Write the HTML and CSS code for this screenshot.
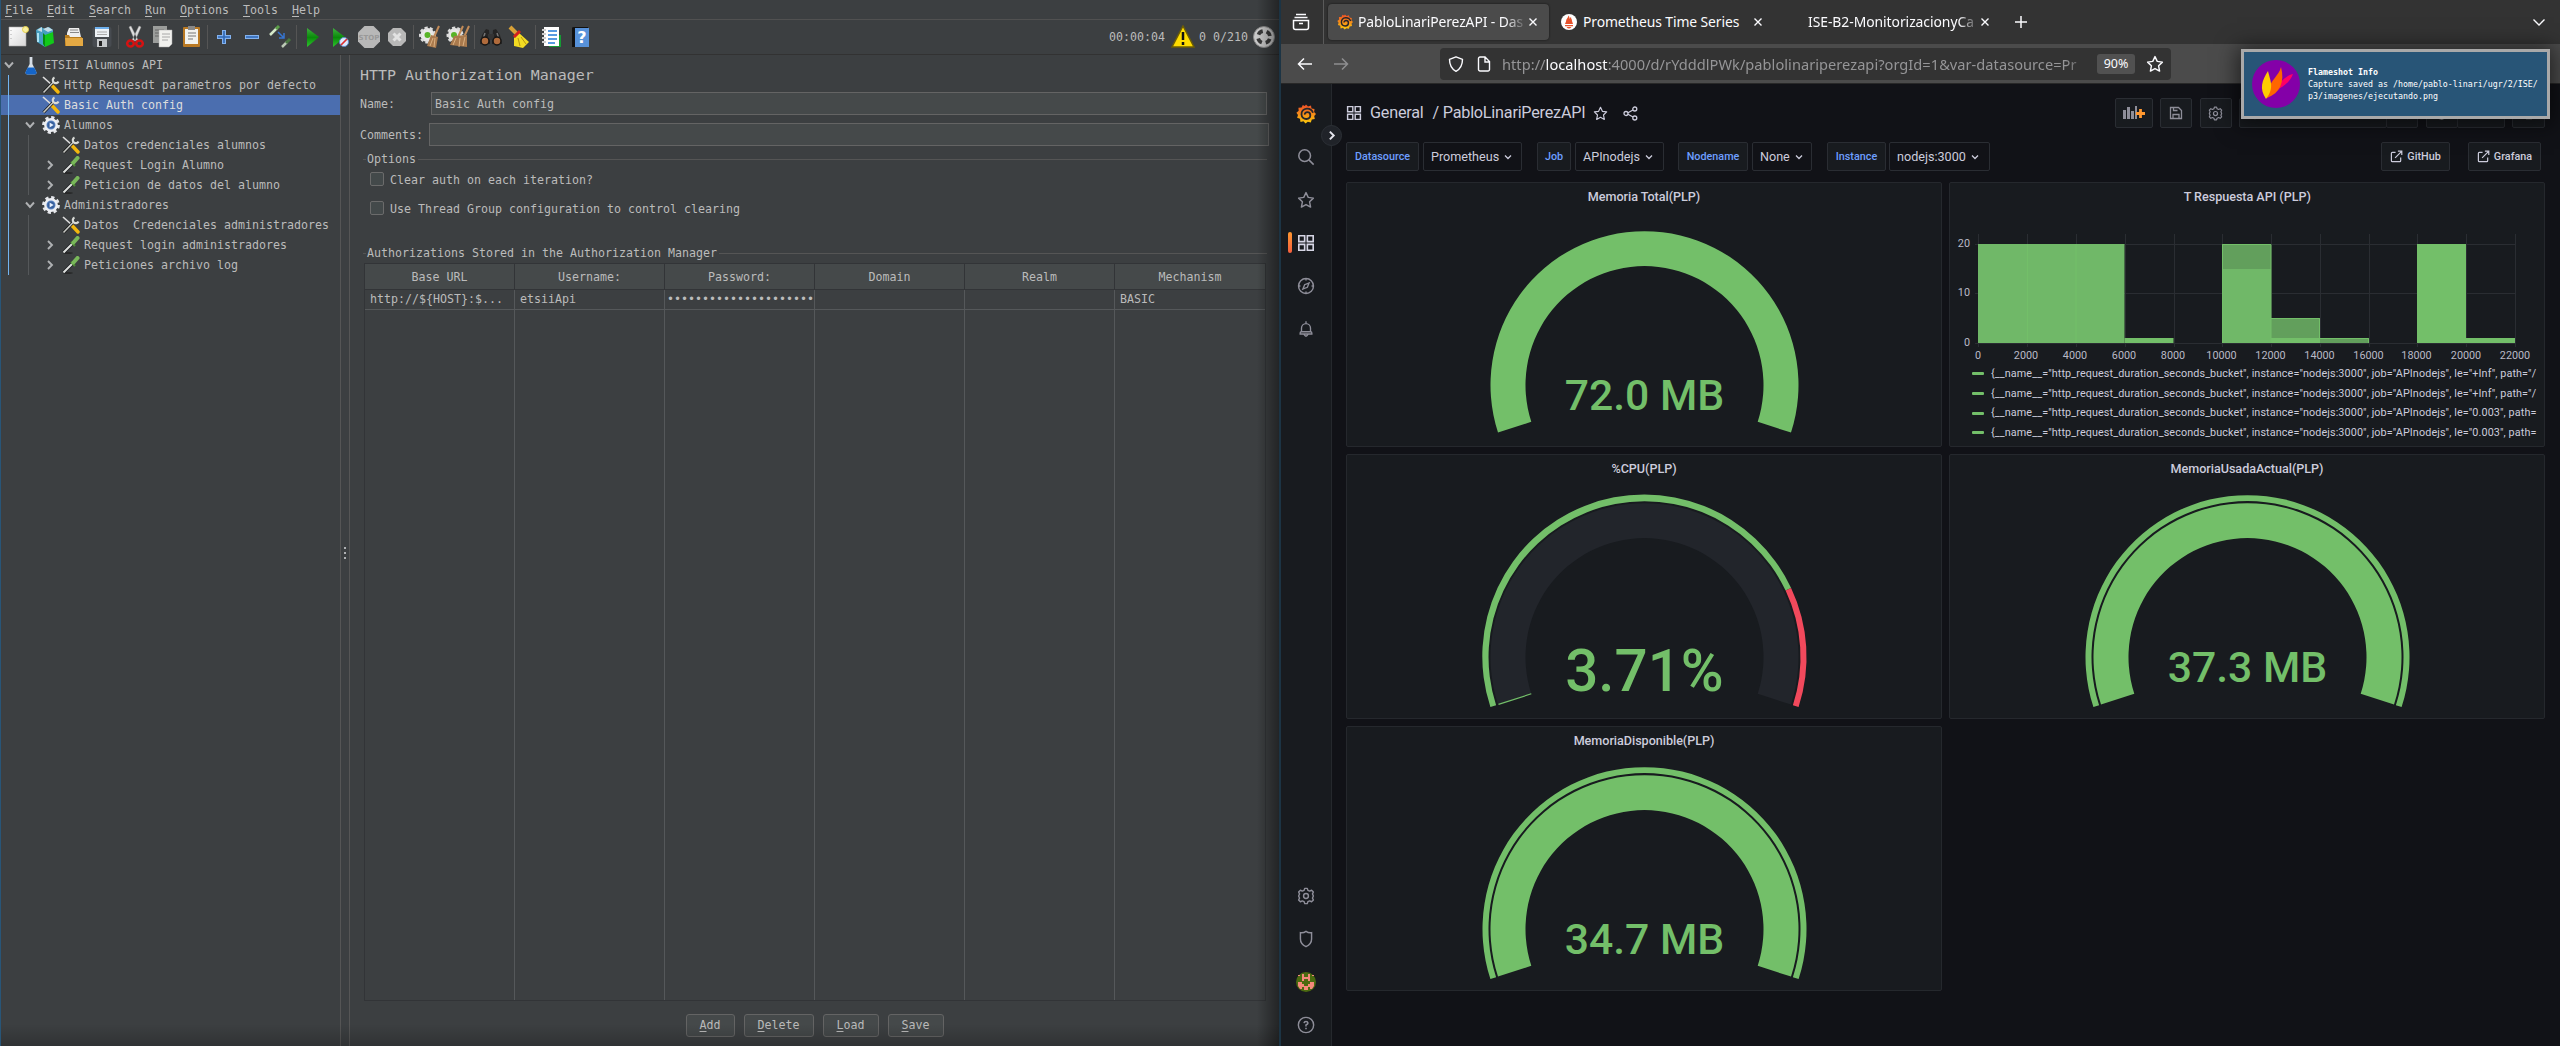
FILE: index.html
```html
<!DOCTYPE html>
<html lang="es">
<head>
<meta charset="utf-8">
<title>JMeter y Grafana</title>
<link rel="stylesheet" href="styles.css">
</head>
<body>
<svg class="defs" width="0" height="0">
  <defs>
    <linearGradient id="flame" x1="0" y1="0" x2="0" y2="1"><stop offset="0" stop-color="#f04e28"/><stop offset="1" stop-color="#fbca0a"/></linearGradient>
    <linearGradient id="play" x1="0" y1="0" x2="0" y2="1"><stop offset="0" stop-color="#3fae3f"/><stop offset=".5" stop-color="#0a8a0a"/><stop offset="1" stop-color="#2fc62f"/></linearGradient>
    <linearGradient id="paper" x1="0" y1="0" x2="1" y2="1"><stop offset="0" stop-color="#ffffff"/><stop offset="1" stop-color="#d8d8d8"/></linearGradient>
  </defs>
  <symbol id="i-wrench" viewBox="0 0 18 18"><path d="M1 1l9 8" stroke="#ddd" stroke-width="1.6"/><path d="M10 9.500l6 6.500" stroke="#f3b70c" stroke-width="3.400" stroke-linecap="round"/><path d="M1.500 16.500L12 5.500" stroke="#151515" stroke-width="3"/><path d="M1.500 16.500L12 5.500" stroke="#c4c6c2" stroke-width="1.700"/><path d="M12.500 1.500a3 3 0 1 0 4 4" fill="none" stroke="#d8dad6" stroke-width="2.200"/></symbol>
  <symbol id="i-gear" viewBox="0 0 18 18"><circle cx="9" cy="9" r="7.400" fill="none" stroke="#e4e6ea" stroke-width="3" stroke-dasharray="3.200 2.600"/><circle cx="9" cy="9" r="5.700" fill="#5d86c5" stroke="#eceef2" stroke-width="2.400"/><circle cx="9" cy="9" r="3.600" fill="#375f9c"/><path d="M7.600 6.600l4 2.400-4 2.400z" fill="#e6f0ff"/></symbol>
  <symbol id="i-drop" viewBox="0 0 18 18"><ellipse cx="6" cy="17" rx="5" ry=".8" fill="#222"/><path d="M1.500 16.500L10 8" stroke="#1d1f20" stroke-width="3.600"/><path d="M1.500 16.500L10.500 7.500" stroke="#dfe2e0" stroke-width="2"/><path d="M9 6l4 4" stroke="#4d8b35" stroke-width="2"/><path d="M11.500 6.500l4-4.500" stroke="#79b85a" stroke-width="4" stroke-linecap="round"/></symbol>
  <symbol id="i-flask" viewBox="0 0 14 20"><path d="M7 0v3" stroke="#333" stroke-width="1"/><path d="M5.600 2h2.800v7l4.200 8.500q0 2-2 2H3.400q-2 0-2-2L5.600 9z" fill="#d6dee6"/><path d="M3.700 12.500h6.600l2.300 5q0 2-2 2H3.400q-2 0-2-2z" fill="#1565c8"/></symbol>
  <symbol id="i-grid" viewBox="0 0 20 20"><g fill="none" stroke="currentColor" stroke-width="1.800"><path d="M2 2h6.500v6.500H2zM11.500 2H18v6.500h-6.500zM2 11.500h6.500V18H2zM11.500 11.500H18V18h-6.500z"/></g></symbol>
  <symbol id="i-star" viewBox="0 0 20 20"><path d="M10 1.800l2.500 5.300 5.700.8-4.200 4.100 1.100 5.900-5.100-2.800-5.100 2.800L6 12 1.800 7.900l5.700-.8z" fill="none" stroke="currentColor" stroke-width="1.600" stroke-linejoin="round"/></symbol>
  <symbol id="i-cog" viewBox="0 0 20 20"><path d="M8.600 1.500h2.800l.7 2.200 2 .9 2.100-1 2 2-1 2.100.9 2v.6l-.9 2 1 2.100-2 2-2.100-1-2 .9-.7 2.200H8.600l-.7-2.200-2-.9-2.100 1-2-2 1-2.100-.9-2v-.6l.9-2-1-2.100 2-2 2.100 1 2-.9z" fill="none" stroke="currentColor" stroke-width="1.600" stroke-linejoin="round"/><circle cx="10" cy="10" r="2.700" fill="none" stroke="currentColor" stroke-width="1.600"/></symbol>
  <symbol id="i-graf" viewBox="0 0 20 20"><path d="M10 .5l2 2 3-1 .5 3 3 .6-.4 3L20 10l-1.800 2 .6 3-3 .6-1 2.900-3-.8-2.300 1.800-2-2.200-3 .7-.5-3.200-2.900-1L2 11 .4 8.700l2.300-1.900-.3-3 3.200-.2L6.800 1l2 .9z" fill="url(#flame)"/><path d="M17 8.700C16 5.800 13.500 4.400 10.700 4.600 7.200 4.800 5.300 7.500 5.500 10.400c.2 2.800 2.300 4.700 4.900 4.600 2.200-.1 3.900-1.700 3.900-3.700S12.900 8.200 11.300 8.200 8.700 9.400 8.800 10.600" fill="none" stroke="#25262b" stroke-width="1.800"/></symbol>
  <symbol id="i-chev" viewBox="0 0 10 10"><path d="M2 3.500l3 3 3-3" fill="none" stroke="currentColor" stroke-width="1.300"/></symbol>
  <symbol id="i-ext" viewBox="0 0 14 14"><path d="M6 2.500H2.500a1 1 0 0 0-1 1v8a1 1 0 0 0 1 1h8a1 1 0 0 0 1-1V8M8.500 1.300h4.200v4.200M12.500 1.500L5.500 8.500" fill="none" stroke="currentColor" stroke-width="1.300"/></symbol>
  <symbol id="i-x" viewBox="0 0 10 10"><path d="M1.500 1.500l7 7M8.500 1.500l-7 7" stroke="#fbfbfe" stroke-width="1.400"/></symbol>
  <symbol id="i-down" viewBox="0 0 10 10"><path d="M1 2.500l4 4.500 4-4.500" fill="none" stroke="#afb1b3" stroke-width="1.900"/></symbol>
  <symbol id="i-right" viewBox="0 0 10 10"><path d="M3 1l4 4-4 4" fill="none" stroke="#afb1b3" stroke-width="1.900"/></symbol>
  <symbol id="i-zoom" viewBox="0 0 20 20"><circle cx="8.500" cy="8.500" r="6.500" fill="none" stroke="currentColor" stroke-width="1.700"/><path d="M13.200 13.200L18.500 18.500" stroke="currentColor" stroke-width="1.700"/></symbol>
</svg>

<main class="jmeter">
  <nav class="menu"><span><u>F</u>ile</span><span><u>E</u>dit</span><span><u>S</u>earch</span><span><u>R</u>un</span><span><u>O</u>ptions</span><span><u>T</u>ools</span><span><u>H</u>elp</span></nav>
  <div class="tools">
    <svg viewBox="0 0 24 24"><path d="M3 2h17v19H3z" fill="url(#paper)" stroke="#aaa" stroke-width=".6"/><path d="M5 5v12" stroke="#aaa" stroke-dasharray="1 3"/><circle cx="19.500" cy="4.500" r="3" fill="#f8f0a0" stroke="#e6d04d" stroke-width="1"/></svg>
    <svg viewBox="0 0 24 24"><path d="M2 5l5-3 4 2 4-2 4 3v5l-8 3v9l-8-5z" fill="#469fc1"/><path d="M3 5l5-3v5M9 4l5-2 5 3-5 2z" fill="#c3dce6"/><path d="M11 10l8-3 1 11-9 4z" fill="#12c91a"/><path d="M11 10l-2-2v11l2 3z" fill="#078d10"/><path d="M4 8v9" stroke="#a9e2f4" stroke-width="2"/></svg>
    <svg viewBox="0 0 24 24"><path d="M5 8l2-5h10l2 9H5z" fill="#eee"/><path d="M8 5h8M8 7.500h9" stroke="#888"/><path d="M3 10h4l1 2h12v9H3z" fill="#b87c1c"/><path d="M3 13h18v8H4z" fill="#e4a943"/></svg>
    <svg viewBox="0 0 24 24"><rect x="2.500" y="2" width="19" height="20" rx="2" fill="#474b50"/><path d="M5 2h14v10H5z" fill="#eef2f6"/><path d="M5 2h14v2H5z" fill="#6eb0ed"/><path d="M7 7h10M7 9.500h10" stroke="#aaa"/><path d="M7 14h10v8H7z" fill="#c5c8ca"/><path d="M9 16h3v5H9z" fill="#222"/></svg>
    <i></i>
    <svg viewBox="0 0 24 24"><path d="M6 2l2-1 7 14-3 1zM18 2l-2-1-7 14 3 1z" fill="#dedede" stroke="#999" stroke-width=".4"/><g fill="none" stroke="#d51212" stroke-width="2.500"><ellipse cx="7.500" cy="18.500" rx="3.300" ry="3"/><ellipse cx="16.500" cy="18.500" rx="3.300" ry="3"/></g></svg>
    <svg viewBox="0 0 24 24"><path d="M2 1h14v17H2z" fill="#9b9d9b"/><path d="M4 5h9M4 8h4M4 11h4" stroke="#666"/><path d="M8 5h13v14l-3 3H8z" fill="#f1f1ee" stroke="#aaa" stroke-width=".5"/><path d="M11 9h8M11 12h8M11 15h6" stroke="#a8a8a8"/></svg>
    <svg viewBox="0 0 24 24"><rect x="4" y="2" width="17" height="20" rx="1" fill="#b97923"/><path d="M6 4h13v15H6z" fill="#f2f2ee"/><path d="M9 1h7v4H9z" fill="#888"/><path d="M9 8h8M9 11h8M9 14h5" stroke="#777"/></svg>
    <i></i>
    <svg viewBox="0 0 24 24"><path d="M12 5v14M5 12h14" stroke="#83b2ee" stroke-width="4"/><path d="M12 6v12M6 12h12" stroke="#2e67b5" stroke-width="1.600"/></svg>
    <svg viewBox="0 0 24 24"><path d="M5 12h14" stroke="#83b2ee" stroke-width="4"/><path d="M6 12h12" stroke="#2e67b5" stroke-width="1.600"/></svg>
    <svg viewBox="0 0 24 24"><path d="M2 10l7-7" stroke="#d5e9c8" stroke-width="2.500"/><path d="M8 4l3-3" stroke="#5b9d48" stroke-width="3"/><path d="M10 7l6 6m0-5v5h-5" fill="none" stroke="#3675d1" stroke-width="1.500"/><path d="M14 22l5-5" stroke="#bbc8b5" stroke-width="2.500"/><path d="M18 18l4-4" stroke="#497641" stroke-width="3"/></svg>
    <i></i>
    <svg viewBox="0 0 24 24"><path d="M6 3l12 9-12 10z" fill="url(#play)"/></svg>
    <svg viewBox="0 0 24 24"><path d="M4 3l12 9-12 10z" fill="url(#play)"/><circle cx="15" cy="17" r="4.500" fill="#deeaff" stroke="#5c87c8"/><path d="M12 20l6-6" stroke="#de3030" stroke-width="1.700"/></svg>
    <svg viewBox="0 0 24 24"><path d="M7.500 1h9L23 7.500v9L16.500 23h-9L1 16.500v-9z" fill="#b8b8b8"/><text x="12" y="15" class="stop">STOP</text></svg>
    <svg viewBox="0 0 24 24"><path d="M8 3h8l5 5v8l-5 5H8l-5-5V8z" fill="#b8b8b8"/><path d="M8.500 8.500l7 7m0-7l-7 7" stroke="#e2e2e2" stroke-width="3"/></svg>
    <i></i>
    <svg viewBox="0 0 24 24"><circle cx="9.500" cy="10" r="7" fill="#e8e8e8" stroke="#ddd" stroke-width="3" stroke-dasharray="3 2"/><circle cx="9.500" cy="10" r="3" fill="#58b428"/><path d="M21 1l-5 11" stroke="#c28b58" stroke-width="2"/><path d="M13 10l7 2-2 11-9-2z" fill="#aa7a4d"/><path d="M15 13l-3 8M17 13l-1 9" stroke="#dbb182"/></svg>
    <svg viewBox="0 0 24 24"><circle cx="9" cy="10" r="7" fill="#e8e8e8" stroke="#ddd" stroke-width="3" stroke-dasharray="3 2"/><circle cx="8" cy="10" r="3" fill="#58b428"/><path d="M17 1l-5 11M23 1l-5 11" stroke="#c28b58" stroke-width="2"/><path d="M8 11l13-1v12l-17-2z" fill="#aa7a4d"/><path d="M10 13l-3 7M14 13l-1 9M19 12l-2 9" stroke="#dbb182"/></svg>
    <i></i>
    <svg viewBox="0 0 24 24"><path d="M7 4l3 1 1 14H1l2-9zM17 4l-3 1-1 14h10l-2-9z" fill="#242424"/><path d="M9 9h6v6H9z" fill="#343434"/><path d="M6 8l-2 6M18 8l2 6" stroke="#777" stroke-width="1.500"/><g fill="#b06b3c" stroke="#151515" stroke-width="1.500"><circle cx="6" cy="16" r="4"/><circle cx="18" cy="16" r="4"/></g></svg>
    <svg viewBox="0 0 24 24"><path d="M3 2l8 8" stroke="#d8a137" stroke-width="4"/><path d="M12 8l10 9-6 6-9-2V13z" fill="#f3dc22"/><path d="M7 12l6-6" stroke="#d3211d" stroke-width="3"/><path d="M11 13l2 8M14 12l5 7" stroke="#b59512"/></svg>
    <i></i>
    <svg viewBox="0 0 24 24"><path d="M18 10h3v12H9v-4z" fill="#159b34"/><path d="M4 2h15v19H4z" fill="#fff"/><path d="M8 6h9M8 10h9M8 14h9M8 18h7" stroke="#237bd8" stroke-width="1.400"/><path d="M2 5h4M2 9h4M2 13h4M2 17h4" stroke="#ccc" stroke-width="2"/></svg>
    <svg viewBox="0 0 24 24"><path d="M4 3q0-1 2-1h14v20H4z" fill="#111"/><path d="M7 3h14v19H7z" fill="#5792da"/><text x="14" y="18" class="help">?</text></svg>
    <div class="status"><span>00:00:04</span><svg viewBox="0 0 24 24"><path d="M12 1l11 21H1z" fill="#ffdc00" stroke="#6c5d06" stroke-width="1.500"/><path d="M12 7v8m0 2v3" stroke="#111" stroke-width="2.500"/></svg><span>0</span><span>0/210</span><svg viewBox="0 0 24 24"><circle cx="12" cy="12" r="10.500" fill="#c9c9c9" stroke="#8a8a8a"/><circle cx="12" cy="12" r="6" fill="none" stroke="#3a3a3a" stroke-width="3.600" stroke-dasharray="5.400 4.025" stroke-dashoffset="-2"/></svg></div>
  </div>
  <div class="work">
    <aside class="tree">
      <div class="row root"><svg class="c"><use href="#i-down"/></svg><svg class="flask"><use href="#i-flask"/></svg><span>ETSII Alumnos API</span></div>
      <div class="kids blue">
        <div class="row"><svg class="g"><use href="#i-wrench"/></svg><span>Http Requesdt parametros por defecto</span></div>
        <div class="row sel"><svg class="g"><use href="#i-wrench"/></svg><span>Basic Auth config</span></div>
        <div class="row"><svg class="c"><use href="#i-down"/></svg><svg class="g"><use href="#i-gear"/></svg><span>Alumnos</span></div>
        <div class="kids">
          <div class="row"><svg class="g"><use href="#i-wrench"/></svg><span>Datos credenciales alumnos</span></div>
          <div class="row"><svg class="c"><use href="#i-right"/></svg><svg class="g"><use href="#i-drop"/></svg><span>Request Login Alumno</span></div>
          <div class="row"><svg class="c"><use href="#i-right"/></svg><svg class="g"><use href="#i-drop"/></svg><span>Peticion de datos del alumno</span></div>
        </div>
        <div class="row"><svg class="c"><use href="#i-down"/></svg><svg class="g"><use href="#i-gear"/></svg><span>Administradores</span></div>
        <div class="kids">
          <div class="row"><svg class="g"><use href="#i-wrench"/></svg><span>Datos  Credenciales administradores</span></div>
          <div class="row"><svg class="c"><use href="#i-right"/></svg><svg class="g"><use href="#i-drop"/></svg><span>Request login administradores</span></div>
          <div class="row"><svg class="c"><use href="#i-right"/></svg><svg class="g"><use href="#i-drop"/></svg><span>Peticiones archivo log</span></div>
        </div>
      </div>
    </aside>
    <div class="grip"><b></b><b></b><b></b></div>
    <section class="editor">
      <h1>HTTP Authorization Manager</h1>
      <label class="field name"><span>Name:</span><div>Basic Auth config</div></label>
      <label class="field comments"><span>Comments:</span><div></div></label>
      <div class="legend"><span>Options</span></div>
      <div class="check first"><b></b>Clear auth on each iteration?</div>
      <div class="check"><b></b>Use Thread Group configuration to control clearing</div>
      <div class="legend second"><span>Authorizations Stored in the Authorization Manager</span></div>
      <div class="table">
        <div class="tr th"><span>Base URL</span><span>Username:</span><span>Password:</span><span>Domain</span><span>Realm</span><span>Mechanism</span></div>
        <div class="tr"><span>http://${HOST}:$...</span><span>etsiiApi</span><span class="pw">•••••••••••••••••••••</span><span></span><span></span><span>BASIC</span></div>
        <div class="tr rest"><span></span><span></span><span></span><span></span><span></span><span></span></div>
      </div>
      <div class="actions"><button><u>A</u>dd</button><button><u>D</u>elete</button><button><u>L</u>oad</button><button><u>S</u>ave</button></div>
    </section>
  </div>
</main>

<main class="browser">
  <div class="tabs">
    <div class="view"><svg width="18" height="18" viewBox="0 0 18 18"><path d="M4 1.500h10M2.500 4.500h13M1.500 7.500h15v7a2 2 0 0 1-2 2h-11a2 2 0 0 1-2-2zM7 10.500h4" fill="none" stroke="#fbfbfe" stroke-width="1.500"/></svg></div>
    <div class="tab on"><svg width="16" height="16"><use href="#i-graf"/></svg><span>PabloLinariPerezAPI - Das</span><svg width="10" height="10"><use href="#i-x"/></svg></div>
    <div class="tab two"><svg width="16" height="16" viewBox="0 0 16 16"><circle cx="8" cy="8" r="8" fill="#fff"/><path d="M4 10h8L11 7c0-2-1-2-1-4-1 1-1 1-1.300 2C8.500 3 8 2 7.500 1.500 7 4 5 5 5 7.500zM4 11h8v1.300H4zM5.500 13h5q-2.500 3-5 0z" fill="#e6522c"/></svg><span>Prometheus Time Series</span><svg width="10" height="10"><use href="#i-x"/></svg></div>
    <div class="tab three"><span>ISE-B2-MonitorizacionyCa</span><svg width="10" height="10"><use href="#i-x"/></svg></div>
    <svg class="plus" width="14" height="14" viewBox="0 0 14 14"><path d="M7 1v12M1 7h12" stroke="#fbfbfe" stroke-width="1.500"/></svg>
    <svg class="more" width="14" height="14" viewBox="0 0 14 14"><path d="M1.500 4.500L7 10l5.500-5.500" fill="none" stroke="#fbfbfe" stroke-width="1.400"/></svg>
  </div>
  <div class="nav">
    <svg width="16" height="16" viewBox="0 0 16 16"><path d="M15 8H2M7 2.500L1.500 8 7 13.500" fill="none" stroke="#fbfbfe" stroke-width="1.500"/></svg>
    <svg class="fwd" width="16" height="16" viewBox="0 0 16 16"><path d="M1 8h13M9 2.500L14.500 8 9 13.500" fill="none" stroke="#8e8e90" stroke-width="1.500"/></svg>
    <div class="url">
      <svg width="16" height="16" viewBox="0 0 16 16"><path d="M8 .8l6.500 2.500c0 6-2 9.700-6.500 12C3.500 13 1.500 9.300 1.500 3.300z" fill="none" stroke="#fbfbfe" stroke-width="1.400" stroke-linejoin="round"/></svg>
      <svg class="doc" width="14" height="16" viewBox="0 0 14 16"><path d="M1.500 2.500a1.500 1.500 0 0 1 1.500-1.500h5l4.500 4.500v8A1.500 1.500 0 0 1 11 15H3a1.500 1.500 0 0 1-1.500-1.500zM8 1v5h4.500" fill="none" stroke="#fbfbfe" stroke-width="1.400"/></svg>
      <span class="addr">http://<em>localhost</em>:4000/d/rYdddlPWk/pablolinariperezapi?orgId=1&amp;var-datasource=Pr</span>
      <span class="pct">90%</span>
      <svg width="18" height="18" class="bm"><use href="#i-star"/></svg>
    </div>
  </div>
  <div class="grafana">
    <aside class="side">
      <svg class="logo"><use href="#i-graf"/></svg>
      <svg><use href="#i-zoom"/></svg>
      <svg><use href="#i-star"/></svg>
      <svg class="cur"><use href="#i-grid"/></svg>
      <svg viewBox="0 0 20 20"><circle cx="10" cy="10" r="8.300" fill="none" stroke="currentColor" stroke-width="1.600"/><path d="M13.500 6.500l-2 5-5 2 2-5zM10 1.500v2.300M10 16.200v2.300M1.500 10h2.300M16.200 10h2.300" fill="none" stroke="currentColor" stroke-width="1.500"/></svg>
      <svg viewBox="0 0 20 20"><path d="M10 1.500v2M5 13V9a5 5 0 0 1 10 0v4M5 13h10q1.500 0 1.500 1.500v1h-13v-1Q3.500 13 5 13zM7.800 16q2.200 4 4.400 0" fill="none" stroke="currentColor" stroke-width="1.500"/></svg>
      <svg class="push"><use href="#i-cog"/></svg>
      <svg viewBox="0 0 20 20"><path d="M3.800 3q3.500.5 6.200-1.500Q12.700 3.500 16.200 3v7c0 4-2 6.500-6.200 8.500C5.800 16.500 3.800 14 3.800 10z" fill="none" stroke="currentColor" stroke-width="1.600"/></svg>
      <svg class="ava" viewBox="0 0 20 20"><circle cx="10" cy="10" r="10" fill="#4b6a10"/><path d="M6 2h2v3h4V2h2v7h-2V7H8v2H6zM2 10h4v2h2v2h4v-2h2v-2h4v4l-2 3h-2v-2h-2v3H8v-3H6v2H4l-2-3zM2 3h2v1H2zM16 3h2v1h-2z" fill="#f4897b"/></svg>
      <svg viewBox="0 0 20 20"><circle cx="10" cy="10" r="8.500" fill="none" stroke="currentColor" stroke-width="1.600"/><path d="M7.800 8q.3-2 2.200-2t2.200 1.800Q12.200 9 10 10v1.800M10 13v1.700" fill="none" stroke="currentColor" stroke-width="1.700"/></svg>
      <span class="toggle"><svg width="11" height="11" viewBox="0 0 10 10"><path d="M3.500 1.500L7 5 3.500 8.500" fill="none" stroke="#e4e4ec" stroke-width="1.800"/></svg></span>
    </aside>
    <div class="dash">
      <header class="crumb">
        <svg width="16" height="16"><use href="#i-grid"/></svg><span class="gen">General</span><span>/ PabloLinariPerezAPI</span>
        <svg width="15" height="15"><use href="#i-star"/></svg>
        <svg class="share" width="15" height="15" viewBox="0 0 15 15"><g fill="none" stroke="currentColor" stroke-width="1.300"><circle cx="3" cy="7.500" r="2"/><circle cx="11.800" cy="3" r="2"/><circle cx="11.800" cy="12" r="2"/><path d="M5 6.700l5-2.700M5 8.300l5 2.700"/></g></svg>
        <div class="btns">
          <b class="w38"><svg width="22" height="14" viewBox="0 0 22 14"><path d="M0 4h3v9H0zM4 1h3v12H4zM8 5h3v8H8zM12 0h2v13h-2z" fill="#8e8e99"/><path d="M17.500 3v9M13 7.500h9" stroke="#ff9830" stroke-width="2.800"/></svg></b>
          <b class="w32"><svg width="14" height="14" viewBox="0 0 14 14"><path d="M1.500 1.500h8l3 3v8h-11zM4.500 1.500v3h4M4 12.500v-4h6v4" fill="none" stroke="currentColor" stroke-width="1.300"/></svg></b>
          <b class="w32"><svg width="15" height="15"><use href="#i-cog"/></svg></b>
          <b class="time"><svg width="14" height="14" viewBox="0 0 14 14"><circle cx="7" cy="7" r="5.500" fill="none" stroke="currentColor" stroke-width="1.300"/><path d="M7 3.500V7h3" fill="none" stroke="currentColor"/></svg></b>
          <b class="join"><svg width="14" height="14"><use href="#i-zoom"/></svg></b>
          <b class="w32"><svg width="14" height="14" viewBox="0 0 14 14"><path d="M12 4A6 6 0 1 0 12 10M12 1v3.500H8.500" fill="none" stroke="currentColor" stroke-width="1.300"/></svg></b>
          <b class="join wide"></b>
          <b class="last"><svg width="14" height="14" viewBox="0 0 14 14"><path d="M1 2h12v8H1zM4 12.500h6" fill="none" stroke="currentColor" stroke-width="1.300"/></svg></b>
        </div>
      </header>
      <div class="vars">
        <b class="k1">Datasource</b><span class="v1">Prometheus<svg><use href="#i-chev"/></svg></span>
        <b class="k2">Job</b><span class="v2">APInodejs<svg><use href="#i-chev"/></svg></span>
        <b class="k3">Nodename</b><span class="v3">None<svg><use href="#i-chev"/></svg></span>
        <b class="k4">Instance</b><span class="v4">nodejs:3000<svg><use href="#i-chev"/></svg></span>
        <a class="gh"><svg width="13" height="13"><use href="#i-ext"/></svg>GitHub</a><a class="gf"><svg width="13" height="13"><use href="#i-ext"/></svg>Grafana</a>
      </div>
      <div class="panels">
        <section class="panel"><h2>Memoria Total(PLP)</h2>
          <svg class="viz" viewBox="0 0 596 265"><g transform="translate(298.500 203)"><path class="green" d="M-146.500 47.600A154 154 0 1 1 146.500 47.600L113.200 36.800A119 119 0 1 0-113.200 36.800z"/><text class="val" y="25">72.0 MB</text></g></svg></section>
        <section class="panel"><h2>T Respuesta API (PLP)</h2>
          <svg class="viz" viewBox="0 0 596 265">
            <path d="M29.500 52v113M78.500 52v113M127.500 52v113M176.500 52v113M225.500 52v113M273.500 52v113M322.500 52v113M371.500 52v113M420.500 52v113M468.500 52v113M517.500 52v113M566.500 52v113M26 62.500h540M26 111.500h540M26 161.500h540" stroke="#2a2d32"/>
            <path d="M29 62h146.500v99H29zM273 87h49v74h-49z" fill="#70b868"/><path d="M78 62h1v99h-1zM126.500 62h1v99h-1z" fill="#73bf69"/>
            <path d="M273 62h49v25h-49zM322 136h49v20h-49zM371 156h49v5h-49z" fill="#629f5c"/>
            <path class="green" d="M175.500 156H224.500v5h-49zM322 156h49v5h-49zM468 62h49v99h-49zM517 156h49v5h-49z"/>
            <path d="M273.500 161V62.500h48.500V161M322 136.500h48.500V161M371 156.500h48.500v4.500" fill="none" stroke="#73bf69"/>
            <g class="ax end"><text x="21" y="65">20</text><text x="21" y="114">10</text><text x="21" y="164">0</text></g>
            <g class="ax"><text x="29" y="177">0</text><text x="77" y="177">2000</text><text x="126" y="177">4000</text><text x="175" y="177">6000</text><text x="224" y="177">8000</text><text x="272.500" y="177">10000</text><text x="321.500" y="177">12000</text><text x="370.500" y="177">14000</text><text x="419.500" y="177">16000</text><text x="467.500" y="177">18000</text><text x="517" y="177">20000</text><text x="566" y="177">22000</text></g>
          </svg>
          <ul><li>{__name__="http_request_duration_seconds_bucket", instance="nodejs:3000", job="APInodejs", le="+Inf", path="/</li><li>{__name__="http_request_duration_seconds_bucket", instance="nodejs:3000", job="APInodejs", le="+Inf", path="/</li><li>{__name__="http_request_duration_seconds_bucket", instance="nodejs:3000", job="APInodejs", le="0.003", path=</li><li>{__name__="http_request_duration_seconds_bucket", instance="nodejs:3000", job="APInodejs", le="0.003", path=</li></ul></section>
        <section class="panel"><h2>%CPU(PLP)</h2>
          <svg class="viz" viewBox="0 0 596 265"><g transform="translate(298.500 203)"><path fill="#22252b" d="M-146.500 47.600A154 154 0 1 1 146.500 47.600L113.200 36.800A119 119 0 1 0-113.200 36.800z"/><path d="M-146 47.400L-113.200 36.800" stroke="#73bf69" stroke-width="1.200"/><path class="green" d="M-154.100 50.100A162 162 0 0 1 146.600-69L141.100-66.400A156 156 0 0 0-148.400 48.200z"/><path fill="#f2495c" d="M146.600-69A162 162 0 0 1 154.100 50.100L148.400 48.200A156 156 0 0 0 141.100-66.400z"/><text class="val big" y="34">3.71%</text></g></svg></section>
        <section class="panel"><h2>MemoriaUsadaActual(PLP)</h2>
          <svg class="viz" viewBox="0 0 596 265"><g transform="translate(298.500 203)"><path class="green" d="M-146.500 47.600A154 154 0 1 1 146.500 47.600L113.200 36.800A119 119 0 1 0-113.200 36.800z"/><path class="green" d="M-154.100 50.100A162 162 0 1 1 154.100 50.100L148.400 48.200A156 156 0 1 0-148.400 48.200z"/><text class="val" y="25">37.3 MB</text></g></svg></section>
        <section class="panel"><h2>MemoriaDisponible(PLP)</h2>
          <svg class="viz" viewBox="0 0 596 265"><g transform="translate(298.500 203)"><path class="green" d="M-146.500 47.600A154 154 0 1 1 146.500 47.600L113.200 36.800A119 119 0 1 0-113.200 36.800z"/><path class="green" d="M-154.100 50.100A162 162 0 1 1 154.100 50.100L148.400 48.200A156 156 0 1 0-148.400 48.200z"/><text class="val" y="25">34.7 MB</text></g></svg></section>
      </div>
    </div>
  </div>
</main>

<div class="toast">
  <svg width="48" height="48" viewBox="0 0 48 48"><circle cx="24" cy="24" r="24" fill="#8400a8"/><path d="M15 38C20 30 36 28 41 14 33 16 28 22 24 29z" fill="#ff0066"/><path d="M15 38C28 33 33 22 29 7 27 16 18 20 17 30z" fill="#ff6600"/><path d="M14 39C7 28 10 21 16 11 18 20 23 28 14 39z" fill="#ffcc00"/></svg>
  <p><strong>Flameshot Info</strong><br>Capture saved as /home/pablo-linari/ugr/2/ISE/<br>p3/imagenes/ejecutando.png</p>
</div>
</body>
</html>
```
FILE: styles.css
```css
* { box-sizing: border-box; }
body { margin: 0; width: 2560px; height: 1046px; overflow: hidden; display: flex; background: #111217; position: relative; }
svg { flex: none; display: block; }
.defs { position: absolute; }

/* JMeter window */
.jmeter { width: 1281px; height: 1046px; background: #3c3f41; color: #bbb; font: 11.63px/20px "DejaVu Sans Mono", monospace; display: flex; flex-direction: column; border-left: 1px solid #285577; position: relative; white-space: nowrap; }
.jmeter::after { content: ""; position: absolute; inset: 0; pointer-events: none; background: linear-gradient(to left, rgba(0,0,0,.42), transparent 22px), linear-gradient(to top, rgba(0,0,0,.2), transparent 22px); border-right: 2px solid #1c3444; }
.menu { height: 20px; display: flex; gap: 14px; padding-left: 4px; border-bottom: 1px solid #515151; line-height: 21px; }
u { text-decoration: underline; text-underline-offset: 2px; }
.tools { height: 35px; display: flex; align-items: center; padding-left: 3px; border-bottom: 1px solid #323232; }
.tools > svg { width: 24px; height: 24px; margin: 0 2px; }
.tools i { width: 1px; height: 24px; background: #555; margin: 0 2px; }
.stop { font: 700 7px "DejaVu Sans", sans-serif; fill: #999; text-anchor: middle; }
.help { font: 700 16px "DejaVu Sans", sans-serif; fill: #fff; text-anchor: middle; }
.status { margin-left: auto; display: flex; align-items: center; padding-right: 5px; }
.status svg { width: 24px; height: 24px; margin: 0 4px 0 6px; }
.status span + span { margin-left: 7px; }
.status svg:last-child { margin: 0 0 0 4px; }
.work { flex: 1; display: flex; min-height: 0; }
.tree { width: 340px; border-right: 1px solid #555; }
.row { height: 20px; display: flex; align-items: center; padding-left: 20px; position: relative; line-height: 22px; }
.row span { white-space: pre; }
.row .c { width: 10px; height: 10px; }
.row .g { width: 18px; height: 18px; margin-right: 4px; }
.root .c { margin-left: -17px; margin-right: 7px; }
.root .flask { width: 14px; height: 20px; margin: 0 6px 0 2px; }
.root span { margin-left: 1px; }
.root .c { margin-right: 10px; }
.root .flask { margin-left: 0; margin-right: 5px; }
.kids { margin-left: 27px; border-left: 1px solid #55585a; }
.kids.blue { margin-left: 7px; border-left: 1px solid #73b4f0; }
.kids.blue > .row { padding-left: 33px; }
.kids.blue > .row .c { margin-left: -17px; margin-right: 7px; }
.kids.blue > .kids { margin-left: 19px; }
.kids.blue > .kids > .row { padding-left: 33px; }
.kids.blue > .kids > .row .c { margin-left: -17px; margin-right: 7px; }
.sel { background: #4b6eaf; margin-left: -8px; color: #ddd; }
.kids.blue > .sel { padding-left: 41px; }
.sel::before { content: ""; position: absolute; left: 7px; width: 1px; height: 20px; background: #73b4f0; }
.grip { width: 9px; border-right: 1px solid #555; display: flex; flex-direction: column; align-items: center; justify-content: center; gap: 3px; padding-top: 4px; }
.grip b { width: 2px; height: 2px; background: #afb1b3; }
.editor { flex: 1; padding: 10px 13px 9px 10px; display: flex; flex-direction: column; }
h1 { margin: 0; font: 14.95px/20px "DejaVu Sans Mono", monospace; }
.field { display: flex; height: 23px; margin-top: 7px; line-height: 24px; }
.field + .field { margin-top: 8px; }
.field span { width: 71px; }
.field div { flex: 1; margin-right: 1px; border: 1px solid #646464; background: #45494a; padding-left: 3px; line-height: 23px; }
.field.comments span { width: 69px; }
.comments div { margin-right: -1px; }
.legend { height: 20px; margin: 3px 1px 0 3px; display: flex; align-items: center; line-height: 22px; }
.legend::before { content: ""; width: 3px; height: 1px; background: #555; }
.legend::after { content: ""; flex: 1; height: 1px; background: #555; margin-left: 2px; }
.legend span { margin-left: 1px; }
.check { display: flex; height: 29px; align-items: center; padding: 5px 0 0 10px; gap: 6px; line-height: 22px; }
.check.first { margin-top: -6px; }
.check b { width: 14px; height: 14px; border: 1px solid #6b6b6b; border-radius: 2px; background: #43494a; margin-bottom: 2px; }
.legend.second { margin-top: 22px; }
.table { flex: 1; margin: 0 2px 13px 4px; border: 1px solid #323437; display: flex; flex-direction: column; }
.tr { display: grid; grid-template-columns: repeat(6, 1fr); height: 20px; border-bottom: 1px solid #55585a; line-height: 19px; }
.tr span { border-right: 1px solid #55585a; padding-left: 5px; overflow: hidden; }
.tr .pw { padding-left: 2px; }
.tr.th { height: 26px; background: #45494a; border-color: #323437; text-align: center; line-height: 27px; }
.tr.th span { border-color: #323437; padding: 0; }
.tr.rest { flex: 1; border: 0; }
.tr span:last-child { border: 0; }
.actions { display: flex; justify-content: center; gap: 9px; padding-left: 1px; }
button { height: 23px; font: inherit; line-height: 21px; color: #bbb; background: #45494a; border: 1px solid #646464; border-radius: 3px; padding: 0 13px; }

/* Browser window */
.browser { width: 1279px; height: 1046px; color: #fbfbfe; font: 14.6px/20px "Noto Sans", sans-serif; }
.tabs { height: 44px; background: #333; display: flex; align-items: center; font-size: 13.9px; }
.view { width: 43px; height: 44px; border-right: 1px solid #5a5a5a; padding: 13px 0 0 11px; }
.tab { height: 36px; display: flex; align-items: center; white-space: nowrap; }
.tab span { overflow: hidden; margin: 0 4px 0 6px; -webkit-mask-image: linear-gradient(to left, transparent, #000 22px); }
.tab.on { margin-left: 4px; width: 221px; padding-left: 9px; background: #4b4b4b; border-radius: 4px; box-shadow: 0 0 2px #111; }
.tab.on span { width: 169px; margin-left: 5px; margin-right: 1px; letter-spacing: -.1px; }
.tab.two { width: 215px; padding-left: 12px; }
.tab.two span { width: 168px; margin-right: 2px; -webkit-mask-image: none; letter-spacing: -.1px; }
.tab.three { padding-left: 38px; }
.tab.three span { width: 172px; margin-right: 0; letter-spacing: -.05px; }
.plus { margin-left: 24px; }
.more { margin-left: auto; margin-right: 14px; }
.nav { height: 40px; background: #4b4b4b; display: flex; align-items: center; padding-left: 16px; border-bottom: 1px solid #282828; }
.fwd { margin: 0 91px 0 20px; }
.url { width: 731px; height: 32px; border-radius: 4px; background: #333; display: flex; align-items: center; padding-left: 8px; }
.doc { margin-left: 13px; }
.addr { width: 588px; overflow: hidden; white-space: nowrap; margin-left: 11px; color: #959597; letter-spacing: .04px; -webkit-mask-image: linear-gradient(to left, transparent, #000 24px); }
.addr em { font-style: normal; color: #fbfbfe; }
.pct { width: 38px; height: 20px; line-height: 20px; border-radius: 3px; background: #515151; font-size: 12.500px; text-align: center; margin-left: 7px; }
.bm { margin-left: 11px; }

/* Grafana */
.grafana { height: 962px; display: flex; background: #111217; color: #ccccdc; font: 12.600px/20px Roboto, sans-serif; }
.side { width: 51px; background: #181b1f; border-right: 1px solid #25282d; padding: 20px 0 12px; display: flex; flex-direction: column; align-items: center; gap: 25px; position: relative; color: #8e8e99; }
.side > svg { width: 18px; height: 18px; }
.side .logo { width: 20px; height: 20px; margin-bottom: -1px; }
.side .cur { color: #d5d5e4; }
.side::before { content: ""; position: absolute; left: 7px; top: 148px; width: 4px; height: 21px; border-radius: 2px; background: linear-gradient(#ff9830, #f55f3e); }
.side .push { margin-top: auto; }
.side .ava { width: 20px; height: 20px; margin: -1px 0; }
.toggle { position: absolute; left: 40px; top: 41px; width: 21px; height: 21px; border-radius: 50%; background: #202329; border: 1px solid #2c3036; display: flex; align-items: center; justify-content: center; }
.dash { flex: 1; padding: 14px 15px 0 14px; }
.crumb { display: flex; height: 30px; align-items: center; font-size: 16.200px; letter-spacing: -.22px; line-height: 22px; white-space: nowrap; }
.gen { margin: 0 9px 0 8px; }
.crumb > svg:nth-of-type(2) { margin-left: 8px; }
.share { margin-left: 15px; }
.btns { margin-left: auto; display: flex; height: 30px; gap: 7.500px; color: #8e8e99; }
.btns b { height: 30px; display: flex; align-items: center; justify-content: center; background: #181b1f; border: 1px solid #2a2d33; border-radius: 2px; }
.w38 { width: 38px; } .w32 { width: 32px; }
.btns .time { width: 148px; justify-content: flex-start; padding-left: 8px; }
.btns .join { width: 32px; margin-left: -8.500px; }
.btns .wide { width: 48px; }
.btns .last { width: 33px; }
.vars { height: 30px; margin-top: 14px; display: flex; line-height: 27px; }
.vars b, .vars span, .vars a { height: 29px; border: 1px solid #2a2d33; border-radius: 2px; white-space: nowrap; display: flex; align-items: center; }
.vars b { font-weight: 500; font-size: 10.800px; color: #6e9fff; background: #181b1f; justify-content: center; margin-right: 4px; }
.vars span { padding-left: 7px; margin-right: 15px; }
.vars span svg { width: 10px; height: 10px; margin-left: 4px; }
.k1 { width: 73px; } .v1 { width: 99px; }
.k2 { width: 34px; } .vars .v2 { width: 89px; margin-right: 14px; }
.k3 { width: 70px; } .v3 { width: 60px; }
.vars .k4 { width: 59px; margin-right: 3px; } .v4 { width: 101px; }
.vars a { font-weight: 500; font-size: 10.800px; background: #181b1f; justify-content: center; gap: 4px; }
.gh { width: 69px; margin-left: auto; } .gf { width: 73px; margin-left: 18px; margin-right: 4px; }
.panels { margin-top: 10px; display: grid; grid-template-columns: 596px 596px; grid-auto-rows: 265px; gap: 7px; }
.panel { background: #181b1f; border: 1px solid #25282d; border-radius: 2px; display: grid; }
.panel > * { grid-area: 1 / 1; }
h2 { margin: 0; padding-top: 4px; font: 500 12.600px/20px Roboto, sans-serif; text-align: center; letter-spacing: -.03px; }
.viz { width: 596px; height: 265px; margin: -1px; }
.green { fill: #73bf69; }
.val { font: 500 42.7px Roboto, sans-serif; fill: #73bf69; text-anchor: middle; }
.big { font-size: 58.3px; }
.ax { font: 10.800px Roboto, sans-serif; fill: #b8b9c6; text-anchor: middle; }
.ax.end { text-anchor: end; }
.panel ul { list-style: none; margin: 181px 8px 0 22px; padding: 0; font-size: 10.800px; letter-spacing: .108px; }
.panel li { height: 19.700px; line-height: 20px; white-space: nowrap; display: flex; align-items: center; gap: 7px; }
.panel li::before { content: ""; width: 12px; height: 3px; border-radius: 1px; background: #73bf69; flex: none; }

/* Desktop notification */
.toast { position: absolute; left: 2241px; top: 49px; width: 309px; height: 70px; border: 3px solid #a9a9a9; background: #285577; box-shadow: 0 2px 20px 4px rgba(0,0,0,.55); display: flex; align-items: center; padding-left: 8px; gap: 8px; color: #fff; }
.toast p { margin: 0; font: 8.300px/12px "DejaVu Sans Mono", monospace; white-space: nowrap; }
```
